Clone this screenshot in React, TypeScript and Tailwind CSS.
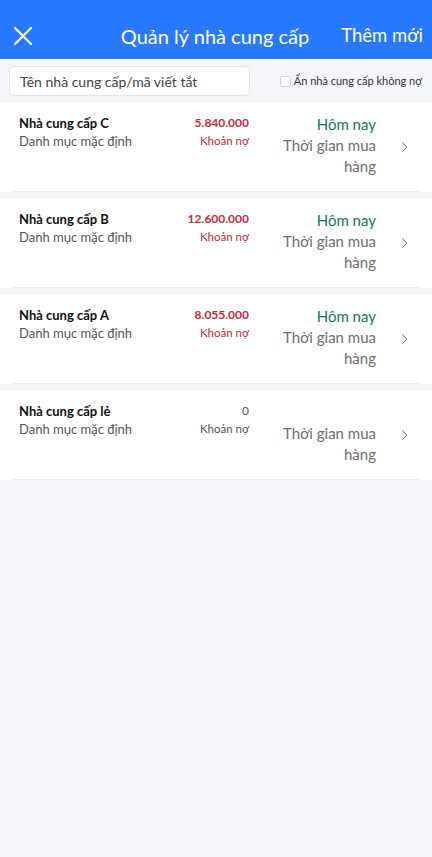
import React from "react";

type Supplier = {
  name: string;
  amount: string;
  debt: boolean;
  today: boolean;
};

const suppliers: Supplier[] = [
  { name: "Nhà cung cấp C", amount: "5.840.000", debt: true, today: true },
  { name: "Nhà cung cấp B", amount: "12.600.000", debt: true, today: true },
  { name: "Nhà cung cấp A", amount: "8.055.000", debt: true, today: true },
  { name: "Nhà cung cấp lẻ", amount: "0", debt: false, today: false },
];

function Card({ s }: { s: Supplier }) {
  return (
    <div className="bg-white h-[89px] mb-[7px] px-[12px]">
      <div className="h-full border-b border-[#eceef3] flex">
        <div className="flex-1 pl-[7px] pt-[11px] flex justify-between">
          <div>
            <div className="text-[13px] leading-[18px] font-bold text-[#111]">{s.name}</div>
            <div className="text-[13px] leading-[18px] text-[#555]">Danh mục mặc định</div>
          </div>
          <div className="text-right">
            <div
              className={
                s.debt
                  ? "text-[12px] leading-[18px] font-bold text-[#c42b3b]"
                  : "text-[12px] leading-[18px] text-[#555]"
              }
            >
              {s.amount}
            </div>
            <div
              className={
                s.debt
                  ? "text-[11.5px] leading-[18px] text-[#c42b3b]"
                  : "text-[11.5px] leading-[18px] text-[#555]"
              }
            >
              Khoản nợ
            </div>
          </div>
        </div>
        <div className="w-[127px] pl-[20px] pt-[11px] text-right">
          <div className="text-[15px] leading-[21px] text-[#137a4a] h-[21px]">
            {s.today ? "Hôm nay" : ""}
          </div>
          <div className="text-[15px] leading-[21px] text-[#6e6e6e]">Thời gian mua hàng</div>
        </div>
        <div className="w-[44px] flex items-center justify-center">
          <svg width="8" height="12" viewBox="0 0 8 12" fill="none" className="ml-[14px]">
            <path d="M1.5 1.5 L6 6 L1.5 10.5" stroke="#777" strokeWidth="1" />
          </svg>
        </div>
      </div>
    </div>
  );
}

export default function App() {
  return (
    <div
      className="w-[432px] h-[857px] bg-[#f5f6fa] overflow-hidden"
      style={{ fontFamily: "Lato, 'Noto Sans', sans-serif" }}
    >
      <div className="h-[59px] bg-[#2979ff] flex items-center pt-[13px] pr-[9px] text-white">
        <div className="w-[44px] flex justify-center">
          <svg width="20" height="20" viewBox="0 0 20 20" fill="none" className="ml-[1px]">
            <path d="M2 2 L18 18 M18 2 L2 18" stroke="white" strokeWidth="2.2" strokeLinecap="round" />
          </svg>
        </div>
        <div className="flex-1 text-right pr-[32px] text-[20px]">Quản lý nhà cung cấp</div>
        <div className="text-[18.5px]">Thêm mới</div>
      </div>
      <div className="flex items-center pt-[7px] pb-[5px] pl-[9px] pr-[10px]">
        <div className="w-[241px] h-[30px] bg-white border border-[#e2e4ea] rounded-[5px] flex items-center pl-[10px] text-[14px] text-[#444]">
          Tên nhà cung cấp/mã viết tắt
        </div>
        <div className="flex-1 flex items-center justify-end">
          <div className="w-[11px] h-[11px] border border-[#d4d4d4] rounded-[2px] bg-white mr-[3px]" />
          <span className="text-[11px] text-[#333]">Ẩn nhà cung cấp không nợ</span>
        </div>
      </div>
      <div className="pt-[2px]">
        {suppliers.map((s) => (
          <Card key={s.name} s={s} />
        ))}
      </div>
    </div>
  );
}
